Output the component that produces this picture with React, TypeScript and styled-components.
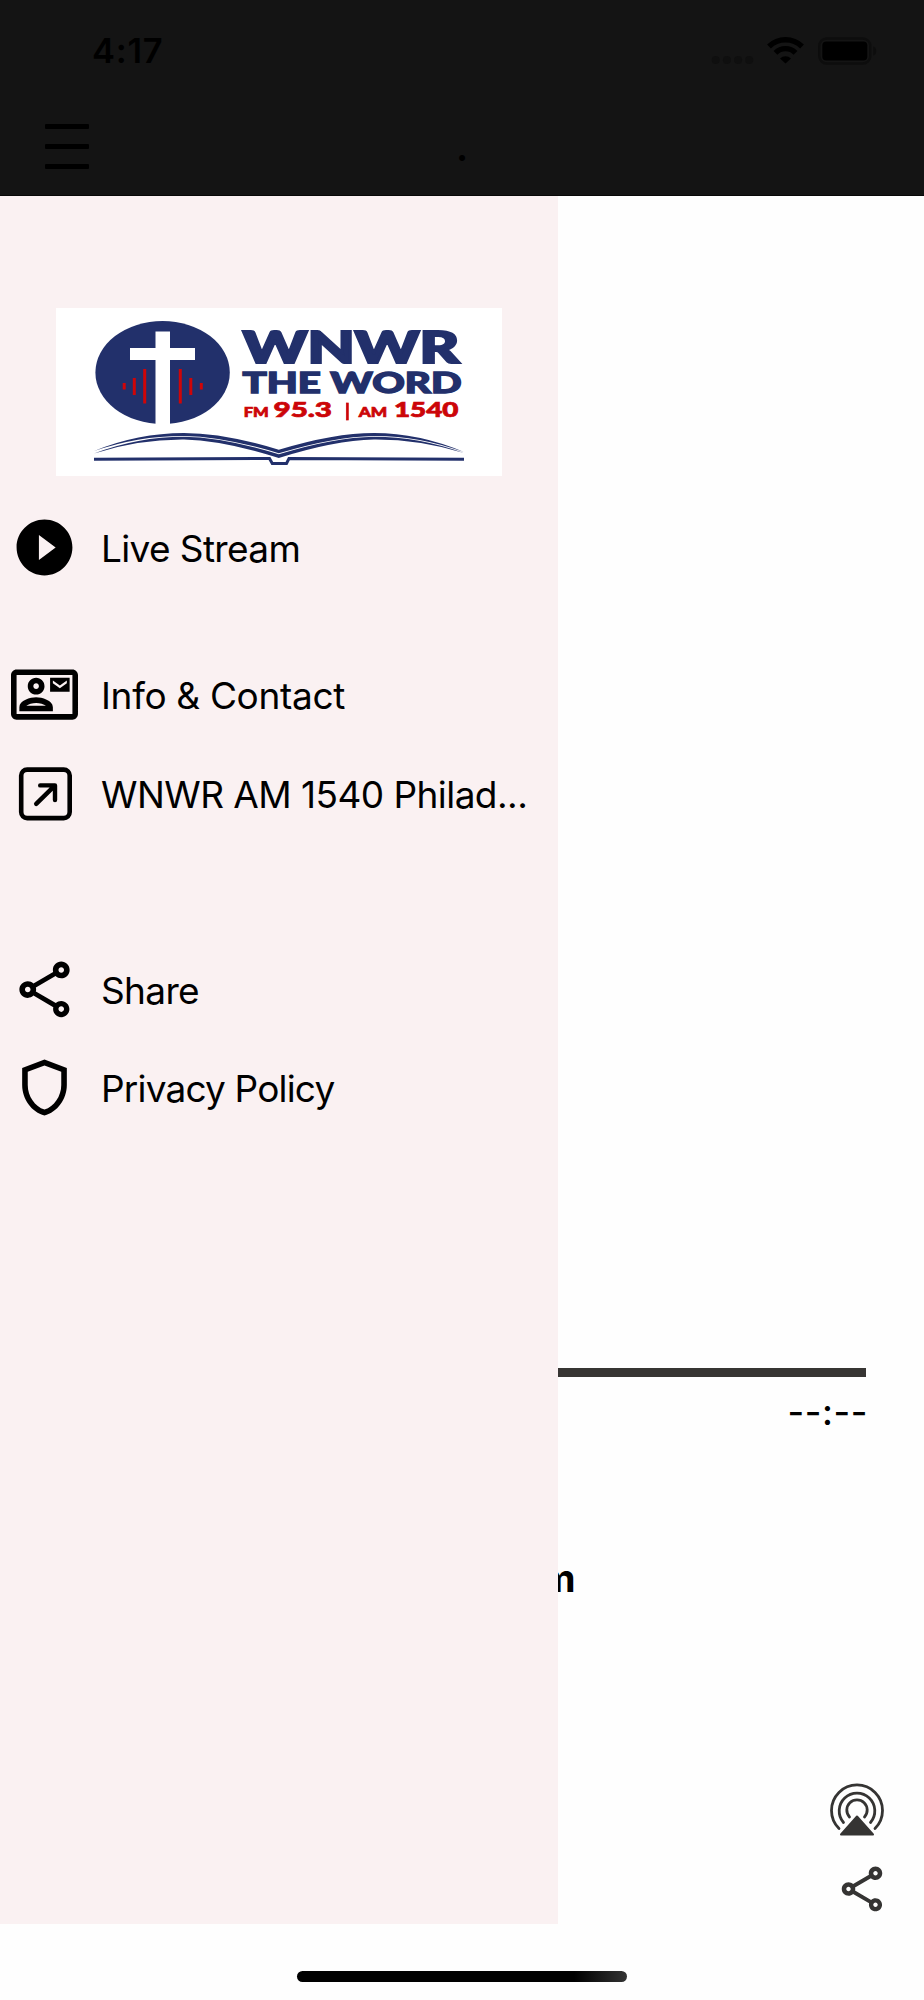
import React from "react";
import styled, { createGlobalStyle } from "styled-components";
import {
  MdOutlineContactMail,
  MdOutlineShare,
  MdOutlineShield,
  MdPlayCircleFilled,
} from "react-icons/md";

const GlobalStyle = createGlobalStyle`
  * { box-sizing: border-box; }
  body {
    margin: 0;
    background: #fefefe;
    font-family: Inter, "Liberation Sans", sans-serif;
    color: #000;
  }
`;

const Screen = styled.div`
  position: relative;
  display: flex;
  flex-direction: column;
  width: 924px;
  height: 2000px;
  overflow: hidden;
  background: #fefefe;
`;

const Header = styled.header`
  display: flex;
  flex-direction: column;
  height: 196px;
  background: #141414;
  border-bottom: 1px solid #080808;
`;

const StatusBar = styled.div`
  display: flex;
  justify-content: space-between;
  align-items: center;
  height: 101px;
  padding: 0 46px 0 92px;
`;

const Clock = styled.span`
  font-size: 34.5px;
  font-weight: 600;
  letter-spacing: 0.7px;
`;

const StatusGlyphs = styled.svg`
  display: block;
  overflow: visible;
`;

const NavBar = styled.div`
  display: grid;
  grid-template-columns: 1fr auto 1fr;
  align-items: center;
  height: 92px;
  padding: 0 45px;
`;

const MenuButton = styled.button`
  display: flex;
  flex-direction: column;
  gap: 15px;
  width: 44px;
  margin-top: -2px;
  padding: 0;
  border: 0;
  background: none;
`;

const MenuLine = styled.span`
  height: 5px;
  border-radius: 1px;
  background: #000;
`;

const NavTitle = styled.h1`
  margin: 0;
  font-size: 38px;
  font-weight: 600;
  line-height: 48px;
`;

const Player = styled.main`
  display: flex;
  flex-direction: column;
  flex: 1;
  padding: 1172px 40px 0 58px;
`;

const Track = styled.div`
  height: 9px;
  margin-right: 18px;
  background: #373533;
`;

const TimeLeft = styled.div`
  margin: 13px 16px 0 0;
  font-size: 36px;
  font-weight: 500;
  line-height: 44px;
  letter-spacing: 0.6px;
  text-align: right;
`;

const StationTitle = styled.h2`
  margin: 120px 18px 0 0;
  font-size: 39px;
  font-weight: 700;
  line-height: 48px;
  letter-spacing: 0.3px;
  text-align: center;
`;

const Actions = styled.div`
  display: flex;
  flex-direction: column;
  align-items: flex-end;
  gap: 25px;
  margin-top: 181px;
  color: #353433;
`;

const ShareAction = styled(MdOutlineShare)`
  display: block;
  width: 54px;
  height: 54px;
  margin-right: -5px;
`;

const AirPlayAction = styled.svg`
  display: block;
`;

const Drawer = styled.aside`
  position: absolute;
  top: 196px;
  left: 0;
  width: 558px;
  height: 1728px;
  padding-top: 112px;
  background: #faf1f2;
`;

const Logo = styled.svg`
  display: block;
  margin-left: 56px;
  background: #fff;
`;

const Menu = styled.nav`
  display: flex;
  flex-direction: column;
  padding-top: 22px;
`;

const MenuItem = styled.a<{ $gap?: number }>`
  display: flex;
  align-items: center;
  gap: 23px;
  height: 98px;
  padding-left: 11px;
  margin-top: ${({ $gap = 0 }) => $gap}px;

  svg {
    display: block;
    flex: none;
    width: 67px;
    height: 67px;
  }
`;

const Label = styled.span<{ $tracking: number }>`
  padding-top: 4px;
  font-size: 37px;
  line-height: 48px;
  letter-spacing: ${({ $tracking }) => $tracking}px;
  white-space: nowrap;
`;

const HomeIndicator = styled.div`
  position: absolute;
  left: 297px;
  bottom: 18px;
  width: 330px;
  height: 11px;
  border-radius: 6px;
  background: linear-gradient(90deg, #000 84%, #333 100%);
`;

const StatusIcons = () => (
  <StatusGlyphs width="164" height="30" viewBox="0 0 164 30">
    <g fill="#0f0f0f">
      <circle cx="1.700" cy="24" r="4" />
      <circle cx="12.900" cy="24" r="4" />
      <circle cx="24.100" cy="24" r="4" />
      <circle cx="35.200" cy="24" r="4" />
    </g>
    <g fill="none" stroke="#000" strokeWidth="5.400">
      <path d="M55 10.500a23.500 23.500 0 0 1 33 0" />
      <path d="M61.500 16.800a14 14 0 0 1 20 0" />
    </g>
    <path d="M66 22.500a8 8 0 0 1 11 0L71.500 27.500z" fill="#000" />
    <rect x="105.300" y="2.500" width="51" height="25" rx="7.500" fill="none" stroke="#0d0d0d" strokeWidth="2.500" />
    <rect x="108.300" y="5.500" width="45" height="19" rx="4" fill="#000" />
    <path d="M159.300 10.500q3 1 3 4.500t-3 4.500z" fill="#0d0d0d" />
  </StatusGlyphs>
);

const StationLogo = () => (
  <Logo width="446" height="168" viewBox="56 308 446 168">
    <ellipse cx="162.600" cy="372.500" rx="67.200" ry="51.500" fill="#22306b" />
    <path d="M155.500 331.500h14.500V348h25v12h-25v65h-14.500v-65H130v-12h25.500z" fill="#fff" />
    <path
      d="M124.200 383v6.500M134.300 378v17M144.700 369v34.500M180.300 369v34.500M190.800 378v17M201.300 383v6.500"
      stroke="#cf0508"
      strokeWidth="3"
    />
    <g fill="#22306b" stroke="#22306b" fontFamily="Lato, sans-serif" fontWeight="900">
      <text x="242.800" y="362.500" fontSize="43" strokeWidth="2.200" textLength="216.500" lengthAdjust="spacingAndGlyphs">WNWR</text>
      <text x="242.500" y="393.300" fontSize="29" strokeWidth="1.400" textLength="219" lengthAdjust="spacingAndGlyphs">THE WORD</text>
    </g>
    <g fill="#cc0508" stroke="#cc0508" strokeWidth="0.700" fontFamily="Lato, sans-serif" fontWeight="900">
      <text x="243.800" y="416.700" fontSize="13.500" textLength="25" lengthAdjust="spacingAndGlyphs">FM</text>
      <text x="273.500" y="416.700" fontSize="20" textLength="58.500" lengthAdjust="spacingAndGlyphs">95.3</text>
      <text x="358.700" y="416.700" fontSize="13.500" textLength="28.500" lengthAdjust="spacingAndGlyphs">AM</text>
      <text x="394" y="416.700" fontSize="20" textLength="64.500" lengthAdjust="spacingAndGlyphs">1540</text>
      <rect x="346.300" y="403" width="2" height="17" />
    </g>
    <g fill="#22306b">
      <path d="M94 451Q138 433 184 433Q224 433 278.800 449.800Q334 433 374 433Q419 433 464 452Q419 435.700 374 435.900Q334 436.500 278.800 453.300Q224 436.500 184 435.900Q138 435.700 94 451z" />
      <path d="M94 453.500Q138 436.700 184 436.700Q224 437.300 278.800 454.300Q334 437.300 374 436.700Q419 436.700 464 453Q419 439.200 374 439.500Q334 440.500 278.800 458Q224 440.500 184 439.500Q138 439.200 94 453.500z" />
    </g>
    <path d="M94 459.300L269.500 458.500L272.300 463.500H286.500L289 458.500L464 459.300" fill="none" stroke="#22306b" strokeWidth="3" />
  </Logo>
);

const LinkIcon = () => (
  <svg viewBox="0 0 67 67" fill="none" stroke="#000">
    <rect x="10.200" y="9.600" width="48.500" height="48.500" rx="6" strokeWidth="4.600" />
    <path d="M25.200 43.900L43.500 25.900M29.200 25.400H44V40.100" strokeWidth="4.400" strokeLinecap="round" strokeLinejoin="round" />
  </svg>
);

const AirPlayIcon = () => (
  <AirPlayAction width="54" height="54" viewBox="0 0 54 54">
    <g fill="none" stroke="currentColor" strokeWidth="2.800" strokeLinecap="round">
      <path d="M9 45.500A25.500 25.500 0 1 1 45 45.500" />
      <path d="M13.500 39.500A17.800 17.800 0 1 1 40.500 39.500" />
      <path d="M19.500 34A10.200 10.200 0 1 1 34.500 34" />
    </g>
    <path d="M27 33.500L43 51.500H11z" fill="currentColor" stroke="currentColor" strokeWidth="2" strokeLinejoin="round" />
  </AirPlayAction>
);

export default function App() {
  return (
    <Screen>
      <GlobalStyle />
      <Header>
        <StatusBar>
          <Clock>4:17</Clock>
          <StatusIcons />
        </StatusBar>
        <NavBar>
          <MenuButton aria-label="Menu">
            <MenuLine />
            <MenuLine />
            <MenuLine />
          </MenuButton>
          <NavTitle>.</NavTitle>
        </NavBar>
      </Header>
      <Player>
        <Track />
        <TimeLeft>--:--</TimeLeft>
        <StationTitle>Live Stream</StationTitle>
        <Actions>
          <AirPlayIcon />
          <ShareAction />
        </Actions>
      </Player>
      <Drawer>
        <StationLogo />
        <Menu>
          <MenuItem>
            <MdPlayCircleFilled />
            <Label $tracking={-0.63}>Live Stream</Label>
          </MenuItem>
          <MenuItem $gap={49}>
            <MdOutlineContactMail />
            <Label $tracking={-0.33}>Info &amp; Contact</Label>
          </MenuItem>
          <MenuItem $gap={1}>
            <LinkIcon />
            <Label $tracking={-0.55}>WNWR AM 1540 Philad...</Label>
          </MenuItem>
          <MenuItem $gap={98}>
            <MdOutlineShare />
            <Label $tracking={-0.65}>Share</Label>
          </MenuItem>
          <MenuItem>
            <MdOutlineShield />
            <Label $tracking={-0.82}>Privacy Policy</Label>
          </MenuItem>
        </Menu>
      </Drawer>
      <HomeIndicator />
    </Screen>
  );
}
